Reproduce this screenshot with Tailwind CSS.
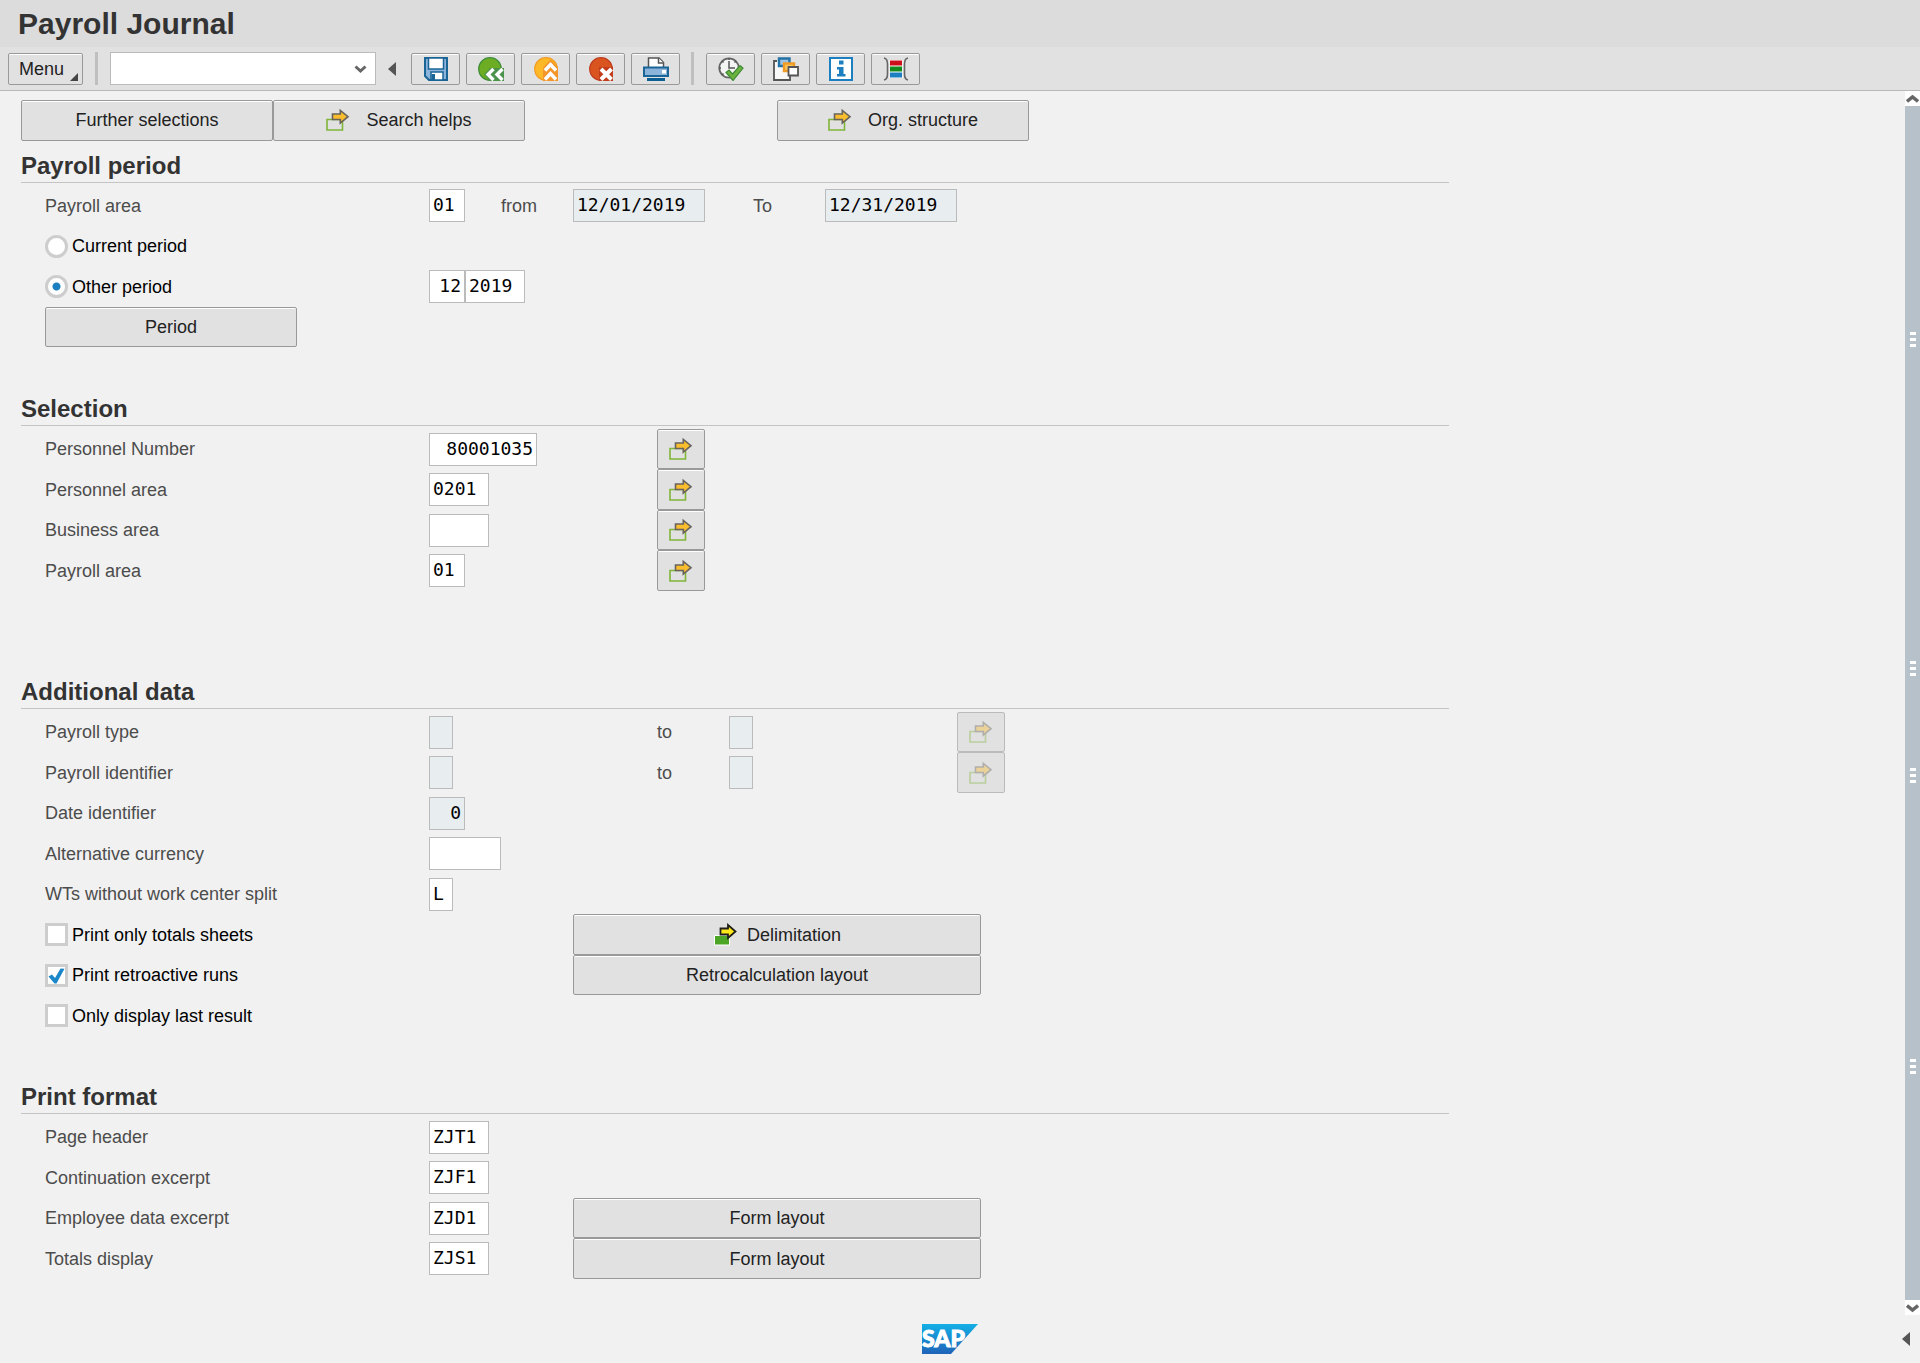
<!DOCTYPE html>
<html lang="en">
<head>
  <meta charset="UTF-8" />
  <title>Payroll Journal</title>
  <script src="https://cdn.jsdelivr.net/npm/@tailwindcss/browser@4"></script>
</head>
<body class="bg-[#f1f1f1] font-['Liberation_Sans',Arial,sans-serif] text-lg leading-6 text-[#4c4c4c]">
  <!-- shared icons -->
  <svg class="hidden">
    <symbol id="icon-multi" viewBox="0 0 24 24">
      <path d="M1 11.500h15.500v10.500H1z" fill="none" stroke="#7fb539" stroke-width="1.600" />
      <path d="M6.500 6h7.800V2.500l7.700 6.200-7.700 6.300v-3.500H6.500z" fill="#fabd2e" stroke="#68645c" stroke-width="1.600" />
    </symbol>
    <symbol id="icon-multi-active" viewBox="0 0 24 24">
      <path d="M1.500 12.500h15v9.500h-15z" fill="#4ca524" stroke="#fff" stroke-width="1" />
      <path d="M7.500 5.500H15V2l7.500 6.500L15 15v-3.500H7.500z" fill="#ffe81a" stroke="#20201a" stroke-width="1.800" />
    </symbol>
  </svg>

  <div class="min-h-screen flex flex-col">
    <header>
      <div class="h-[47px] flex items-center px-[18px] bg-[#dcdcdc]">
        <h1 class="text-3xl leading-9 font-bold text-[#333]">Payroll Journal</h1>
      </div>
      <nav class="h-11 flex items-center pl-2 bg-[#e1e1e1] border-b border-[#b8b8b8]">
        <button class="relative w-[75px] h-8 pl-[10px] text-left text-[#222] bg-[#e1e1e1] border border-[#999] rounded-xs shadow-[inset_0_1px_0_#fff]">
          Menu
          <svg class="absolute right-1 bottom-[3px] size-2" viewBox="0 0 8 8"><path d="M8 0v8H0z" fill="#444" /></svg>
        </button>
        <span class="w-[3px] h-[33px] ml-3 bg-[#bfbfbf]"></span>
        <div class="relative ml-3 w-[266px]">
          <select aria-label="Command" class="block w-full h-[33px] px-1 appearance-none bg-white border border-[#bbb]">
            <option></option>
          </select>
          <svg class="absolute right-[9px] top-3 w-[13px] h-[10px] pointer-events-none" viewBox="0 0 13 10"><path d="M1.500 2.500l5 4.500 5-4.500" fill="none" stroke="#666" stroke-width="3" /></svg>
        </div>
        <button aria-label="Hide toolbar" class="w-8 mr-[3px] flex justify-center">
          <svg class="w-2 h-[14px]" viewBox="0 0 8 14"><path d="M8 0v14L0 7z" fill="#555" /></svg>
        </button>
        <div class="flex gap-[6px]">
          <button aria-label="Save" class="w-[49px] h-8 flex items-center justify-center bg-[#e1e1e1] border border-[#999] rounded-xs shadow-[inset_0_1px_0_#fff]">
            <svg class="size-6" viewBox="0 0 24 24">
              <path d="M1 1h22v22H5l-4-4z" fill="#8cb4da" stroke="#1a6496" stroke-width="2" />
              <path d="M4.500 1h15v11h-15z" fill="#fff" stroke="#1a6496" stroke-width="1.500" />
              <path d="M7 15h12v8H7z" fill="#fff" stroke="#1a6496" stroke-width="1.500" />
              <path d="M7.500 17h3.500v6H7.500z" fill="#1a6496" />
            </svg>
          </button>
          <button aria-label="Back" class="w-[49px] h-8 flex items-center justify-center bg-[#e1e1e1] border border-[#999] rounded-xs shadow-[inset_0_1px_0_#fff]">
            <svg class="w-[26px] h-6" viewBox="0 0 26 24">
              <circle cx="12" cy="12" r="11.300" fill="#6cad24" stroke="#3d8c3a" stroke-width="1.200" />
              <path d="M12 11h14v13H12l-6-6.500z" fill="#4b934a" />
              <path d="M15.500 12l-5.500 5.500 5.500 5.500M24.500 12L19 17.500l5.500 5.500" fill="none" stroke="#fff" stroke-width="3.400" />
            </svg>
          </button>
          <button aria-label="Exit" class="w-[49px] h-8 flex items-center justify-center bg-[#e1e1e1] border border-[#999] rounded-xs shadow-[inset_0_1px_0_#fff]">
            <svg class="size-6" viewBox="0 0 24 24">
              <circle cx="12" cy="12" r="11.300" fill="#fdb827" stroke="#f29b22" stroke-width="1.200" />
              <path d="M16.500 2.500l7.500 8V24H9V10.500z" fill="#f5962a" />
              <path d="M11 13.500l5.500-6 5.500 6M11 22.500l5.500-6 5.500 6" fill="none" stroke="#fff" stroke-width="3.400" />
            </svg>
          </button>
          <button aria-label="Cancel" class="w-[49px] h-8 flex items-center justify-center bg-[#e1e1e1] border border-[#999] rounded-xs shadow-[inset_0_1px_0_#fff]">
            <svg class="size-6" viewBox="0 0 24 24">
              <circle cx="12" cy="12" r="11.300" fill="#d9541e" stroke="#bf3c1d" stroke-width="1.200" />
              <path d="M10 10h14v14H10z" fill="#c23c1c" />
              <path d="M12 12l10.500 10.500M22.500 12L12 22.500" stroke="#fff" stroke-width="4" />
            </svg>
          </button>
          <button aria-label="Print" class="w-[49px] h-8 flex items-center justify-center bg-[#e1e1e1] border border-[#999] rounded-xs shadow-[inset_0_1px_0_#fff]">
            <svg class="w-[26px] h-6" viewBox="0 0 26 24">
              <path d="M5.500 11V1H16l4.500 4.500V11" fill="#fff" stroke="#555" stroke-width="1.500" />
              <path d="M15.500 1v5h5" fill="#fff" stroke="#555" stroke-width="1.500" />
              <path d="M1 10.500h24V19H1z" fill="#8cb4da" stroke="#1a6496" stroke-width="2" />
              <path d="M19 13h4v3.500h-4z" fill="#fff" />
              <path d="M4 21h18v3H4z" fill="#0a5e93" />
            </svg>
          </button>
        </div>
        <span class="w-[3px] h-[33px] ml-[11px] mr-3 bg-[#bfbfbf]"></span>
        <div class="flex gap-[6px]">
          <button aria-label="Execute" class="w-[49px] h-8 flex items-center justify-center bg-[#e1e1e1] border border-[#999] rounded-xs shadow-[inset_0_1px_0_#fff]">
            <svg class="w-[26px] h-6" viewBox="0 0 26 24">
              <circle cx="11" cy="11" r="9.700" fill="#f4f4f4" stroke="#666" stroke-width="1.800" />
              <path d="M11 4v7h6M11 1v2M1 11h2M4 4l1.500 1.500M18 4l-1.500 1.500M4 18l1.500-1.500" fill="none" stroke="#555" stroke-width="1.500" />
              <path d="M8 15.500l3-2.500 3.500 4L22 8.500l3 2.500-10 12.500z" fill="#6cb33e" stroke="#3e8a36" stroke-width="1.200" />
            </svg>
          </button>
          <button aria-label="Get variant" class="w-[49px] h-8 flex items-center justify-center bg-[#e1e1e1] border border-[#999] rounded-xs shadow-[inset_0_1px_0_#fff]">
            <svg class="w-[26px] h-6" viewBox="0 0 26 24">
              <path d="M1 4h16v19H1z" fill="#f8f8f8" />
              <path d="M4 4H1v19h16v-4" fill="none" stroke="#555" stroke-width="1.800" />
              <path d="M6 1.500h10.500V9H6z" fill="#9cc3e2" stroke="#2471a6" stroke-width="2.400" />
              <path d="M11 6.500h10V14H11z" fill="#fcc55c" stroke="#f09a28" stroke-width="2.400" />
              <path d="M15.500 10h9.500v8.500h-9.500z" fill="#fff" stroke="#555" stroke-width="1.800" />
            </svg>
          </button>
          <button aria-label="Information" class="w-[49px] h-8 flex items-center justify-center bg-[#e1e1e1] border border-[#999] rounded-xs shadow-[inset_0_1px_0_#fff]">
            <svg class="size-6" viewBox="0 0 24 24">
              <path d="M1 1h22v22H1z" fill="#fff" stroke="#1b7fc0" stroke-width="2" />
              <path d="M10 3.500h4.500v4H10zM8 10h6.500v7h2v2.500H8V17h2v-4.500H8z" fill="#1b7fc0" />
            </svg>
          </button>
          <button aria-label="Selection options" class="w-[49px] h-8 flex items-center justify-center bg-[#e1e1e1] border border-[#999] rounded-xs shadow-[inset_0_1px_0_#fff]">
            <svg class="w-[26px] h-6" viewBox="0 0 26 24">
              <path d="M1 1c2.500.5 3.500 3 3.500 6v10c0 3-1 5.500-3.500 6M25 1c-2.500.5-3.500 3-3.500 6v10c0 3 1 5.500 3.500 6" fill="none" stroke="#666" stroke-width="1.600" />
              <path d="M6.500 3h13v18h-13z" fill="#fff" />
              <path d="M7 3.500h12v5H7z" fill="#cc1019" />
              <path d="M7 9.500h12v5H7z" fill="#128a1c" />
              <path d="M7 15.500h12v5H7z" fill="#1b7fc0" />
            </svg>
          </button>
        </div>
      </nav>
    </header>

    <div class="flex-1 flex">
      <main class="flex-1 pl-[21px] pt-[9px]">
        <!-- every screen column is 12px wide -->
        <div class="grid grid-cols-[repeat(119,12px)] h-[41px] mb-1">
          <button class="col-start-1 col-span-21 pb-0.5 text-[#222] bg-[#e1e1e1] border border-[#999] rounded-xs shadow-[inset_0_1px_0_#fff]">Further selections</button>
          <button class="col-start-22 col-span-21 pb-0.5 flex items-center justify-center gap-4 text-[#222] bg-[#e1e1e1] border border-[#999] rounded-xs shadow-[inset_0_1px_0_#fff]">
            <svg class="size-6"><use href="#icon-multi" /></svg>Search helps
          </button>
          <button class="col-start-64 col-span-21 pb-0.5 flex items-center justify-center gap-4 text-[#222] bg-[#e1e1e1] border border-[#999] rounded-xs shadow-[inset_0_1px_0_#fff]">
            <svg class="size-6"><use href="#icon-multi" /></svg>Org. structure
          </button>
        </div>

        <section class="grid grid-cols-[repeat(119,12px)] auto-rows-[40px_41px] items-center pb-[41px]">
          <h2 class="col-span-full self-start h-[38px] pt-1 text-2xl leading-[33px] font-bold text-[#333] border-b border-[#c4c4c4]">Payroll period</h2>

          <label for="area" class="col-start-3 col-span-32">Payroll area</label>
          <input id="area" value="01" class="col-start-35 col-span-3 w-full h-[33px] px-[3px] pb-0.5 font-['DejaVu_Sans_Mono',monospace] text-black bg-white border border-[#bbb]" />
          <label for="from" class="col-start-41 col-span-6">from</label>
          <input id="from" value="12/01/2019" disabled class="col-start-47 col-span-11 w-full h-[33px] px-[3px] pb-0.5 font-['DejaVu_Sans_Mono',monospace] text-black bg-[#e8edf0] border border-[#bbb]" />
          <label for="until" class="col-start-62 col-span-6">To</label>
          <input id="until" value="12/31/2019" disabled class="col-start-68 col-span-11 w-full h-[33px] px-[3px] pb-0.5 font-['DejaVu_Sans_Mono',monospace] text-black bg-[#e8edf0] border border-[#bbb]" />

          <label class="col-start-3 col-span-32 flex items-center gap-1 text-black">
            <input type="radio" name="period" class="appearance-none size-[23px] rounded-full bg-white border-3 border-[#cdcdcd]" />Current period
          </label>

          <label class="col-start-3 col-span-32 flex items-center gap-1 text-black">
            <input type="radio" name="period" checked class="appearance-none size-[23px] rounded-full bg-white border-3 border-[#cdcdcd] checked:bg-[radial-gradient(circle,#1b7fc0_3.5px,#fff_4.5px)]" />Other period
          </label>
          <input aria-label="Period number" value="12" class="col-start-35 col-span-3 w-full h-[33px] px-[3px] pb-0.5 text-right font-['DejaVu_Sans_Mono',monospace] text-black bg-white border border-[#bbb]" />
          <input aria-label="Period year" value="2019" class="col-start-38 col-span-5 w-full h-[33px] px-[3px] pb-0.5 font-['DejaVu_Sans_Mono',monospace] text-black bg-white border border-[#bbb]" />

          <button class="col-start-3 col-span-21 self-stretch text-[#222] bg-[#e1e1e1] border border-[#999] rounded-xs shadow-[inset_0_1px_0_#fff]">Period</button>
        </section>

        <section class="grid grid-cols-[repeat(119,12px)] auto-rows-[41px_40px] items-center pb-20">
          <h2 class="col-span-full self-start h-[38px] pt-1 text-2xl leading-[33px] font-bold text-[#333] border-b border-[#c4c4c4]">Selection</h2>

          <label for="pernr" class="col-start-3 col-span-32">Personnel Number</label>
          <input id="pernr" value="80001035" class="col-start-35 col-span-9 w-full h-[33px] px-[3px] pb-0.5 text-right font-['DejaVu_Sans_Mono',monospace] text-black bg-white border border-[#bbb]" />
          <button aria-label="Multiple selection, personnel number" class="col-start-54 col-span-4 self-stretch flex items-center justify-center bg-[#e1e1e1] border border-[#999] rounded-xs shadow-[inset_0_1px_0_#fff]">
            <svg class="size-6"><use href="#icon-multi" /></svg>
          </button>

          <label for="persarea" class="col-start-3 col-span-32">Personnel area</label>
          <input id="persarea" value="0201" class="col-start-35 col-span-5 w-full h-[33px] px-[3px] pb-0.5 font-['DejaVu_Sans_Mono',monospace] text-black bg-white border border-[#bbb]" />
          <button aria-label="Multiple selection, personnel area" class="col-start-54 col-span-4 self-stretch flex items-center justify-center bg-[#e1e1e1] border border-[#999] rounded-xs shadow-[inset_0_1px_0_#fff]">
            <svg class="size-6"><use href="#icon-multi" /></svg>
          </button>

          <label for="busarea" class="col-start-3 col-span-32">Business area</label>
          <input id="busarea" class="col-start-35 col-span-5 w-full h-[33px] px-[3px] pb-0.5 font-['DejaVu_Sans_Mono',monospace] text-black bg-white border border-[#bbb]" />
          <button aria-label="Multiple selection, business area" class="col-start-54 col-span-4 self-stretch flex items-center justify-center bg-[#e1e1e1] border border-[#999] rounded-xs shadow-[inset_0_1px_0_#fff]">
            <svg class="size-6"><use href="#icon-multi" /></svg>
          </button>

          <label for="selarea" class="col-start-3 col-span-32">Payroll area</label>
          <input id="selarea" value="01" class="col-start-35 col-span-3 w-full h-[33px] px-[3px] pb-0.5 font-['DejaVu_Sans_Mono',monospace] text-black bg-white border border-[#bbb]" />
          <button aria-label="Multiple selection, payroll area" class="col-start-54 col-span-4 self-stretch flex items-center justify-center bg-[#e1e1e1] border border-[#999] rounded-xs shadow-[inset_0_1px_0_#fff]">
            <svg class="size-6"><use href="#icon-multi" /></svg>
          </button>
        </section>

        <section class="grid grid-cols-[repeat(119,12px)] auto-rows-[41px_40px] items-center pb-10">
          <h2 class="col-span-full self-start h-[38px] pt-1 text-2xl leading-[33px] font-bold text-[#333] border-b border-[#c4c4c4]">Additional data</h2>

          <label for="type" class="col-start-3 col-span-32">Payroll type</label>
          <input id="type" disabled class="col-start-35 col-span-2 w-full h-[33px] px-[3px] bg-[#e8edf0] border border-[#bbb]" />
          <label for="type2" class="col-start-54 col-span-6">to</label>
          <input id="type2" disabled class="col-start-60 col-span-2 w-full h-[33px] px-[3px] bg-[#e8edf0] border border-[#bbb]" />
          <button disabled aria-label="Multiple selection, payroll type" class="col-start-79 col-span-4 self-stretch flex items-center justify-center bg-[#e1e1e1] border border-[#bbb] rounded-xs">
            <svg class="size-6 opacity-40"><use href="#icon-multi" /></svg>
          </button>

          <label for="ident" class="col-start-3 col-span-32">Payroll identifier</label>
          <input id="ident" disabled class="col-start-35 col-span-2 w-full h-[33px] px-[3px] bg-[#e8edf0] border border-[#bbb]" />
          <label for="ident2" class="col-start-54 col-span-6">to</label>
          <input id="ident2" disabled class="col-start-60 col-span-2 w-full h-[33px] px-[3px] bg-[#e8edf0] border border-[#bbb]" />
          <button disabled aria-label="Multiple selection, payroll identifier" class="col-start-79 col-span-4 self-stretch flex items-center justify-center bg-[#e1e1e1] border border-[#bbb] rounded-xs">
            <svg class="size-6 opacity-40"><use href="#icon-multi" /></svg>
          </button>

          <label for="dateid" class="col-start-3 col-span-32">Date identifier</label>
          <input id="dateid" value="0" disabled class="col-start-35 col-span-3 w-full h-[33px] px-[3px] pb-0.5 text-right font-['DejaVu_Sans_Mono',monospace] text-black bg-[#e8edf0] border border-[#bbb]" />

          <label for="currency" class="col-start-3 col-span-32">Alternative currency</label>
          <input id="currency" class="col-start-35 col-span-6 w-full h-[33px] px-[3px] pb-0.5 font-['DejaVu_Sans_Mono',monospace] text-black bg-white border border-[#bbb]" />

          <label for="split" class="col-start-3 col-span-32">WTs without work center split</label>
          <input id="split" value="L" class="col-start-35 col-span-2 w-full h-[33px] px-[3px] pb-0.5 font-['DejaVu_Sans_Mono',monospace] text-black bg-white border border-[#bbb]" />

          <label class="col-start-3 col-span-32 flex items-center gap-1 text-black">
            <input type="checkbox" class="appearance-none size-[23px] bg-white border-3 border-[#cdcdcd]" />Print only totals sheets
          </label>
          <button class="col-start-47 col-span-34 self-stretch flex items-center justify-center gap-[10px] text-[#222] bg-[#e1e1e1] border border-[#999] rounded-xs shadow-[inset_0_1px_0_#fff]">
            <svg class="size-6"><use href="#icon-multi-active" /></svg>Delimitation
          </button>

          <label class="relative col-start-3 col-span-32 flex items-center gap-1 text-black">
            <input type="checkbox" checked class="peer appearance-none size-[23px] bg-white border-3 border-[#cdcdcd]" />
            <svg class="absolute left-0 size-[23px] hidden peer-checked:block pointer-events-none" viewBox="0 0 23 23"><path d="M3.500 12.500L7 10.500l3 3.500 5.500-9.500 4 .2L11.500 19.500H9.500z" fill="#1b87c9" /></svg>
            Print retroactive runs
          </label>
          <button class="col-start-47 col-span-34 self-stretch text-[#222] bg-[#e1e1e1] border border-[#999] rounded-xs shadow-[inset_0_1px_0_#fff]">Retrocalculation layout</button>

          <label class="col-start-3 col-span-32 flex items-center gap-1 text-black">
            <input type="checkbox" class="appearance-none size-[23px] bg-white border-3 border-[#cdcdcd]" />Only display last result
          </label>
        </section>

        <section class="grid grid-cols-[repeat(119,12px)] auto-rows-[41px_40px] items-center">
          <h2 class="col-span-full self-start h-[38px] pt-1 text-2xl leading-[33px] font-bold text-[#333] border-b border-[#c4c4c4]">Print format</h2>

          <label for="pageheader" class="col-start-3 col-span-32">Page header</label>
          <input id="pageheader" value="ZJT1" class="col-start-35 col-span-5 w-full h-[33px] px-[3px] pb-0.5 font-['DejaVu_Sans_Mono',monospace] text-black bg-white border border-[#bbb]" />

          <label for="continuation" class="col-start-3 col-span-32">Continuation excerpt</label>
          <input id="continuation" value="ZJF1" class="col-start-35 col-span-5 w-full h-[33px] px-[3px] pb-0.5 font-['DejaVu_Sans_Mono',monospace] text-black bg-white border border-[#bbb]" />

          <label for="employee" class="col-start-3 col-span-32">Employee data excerpt</label>
          <input id="employee" value="ZJD1" class="col-start-35 col-span-5 w-full h-[33px] px-[3px] pb-0.5 font-['DejaVu_Sans_Mono',monospace] text-black bg-white border border-[#bbb]" />
          <button class="col-start-47 col-span-34 self-stretch text-[#222] bg-[#e1e1e1] border border-[#999] rounded-xs shadow-[inset_0_1px_0_#fff]">Form layout</button>

          <label for="totals" class="col-start-3 col-span-32">Totals display</label>
          <input id="totals" value="ZJS1" class="col-start-35 col-span-5 w-full h-[33px] px-[3px] pb-0.5 font-['DejaVu_Sans_Mono',monospace] text-black bg-white border border-[#bbb]" />
          <button class="col-start-47 col-span-34 self-stretch text-[#222] bg-[#e1e1e1] border border-[#999] rounded-xs shadow-[inset_0_1px_0_#fff]">Form layout</button>
        </section>
      </main>

      <!-- scrollbar -->
      <aside class="w-[15px] flex flex-col bg-[#b7c1ca]">
        <button aria-label="Scroll up" class="h-[15px] flex items-center justify-center bg-white">
          <svg class="w-[13px] h-[10px]" viewBox="0 0 13 10"><path d="M1 7.500L6.500 3 12 7.500" fill="none" stroke="#666" stroke-width="3.400" /></svg>
        </button>
        <div class="flex-1 flex flex-col items-center">
          <span class="grow-226 basis-0"></span>
          <svg class="w-[6px] h-[15px]" viewBox="0 0 6 15"><path d="M0 0h6v3H0zM0 6h6v3H0zM0 12h6v3H0z" fill="#fff" /></svg>
          <span class="grow-314 basis-0"></span>
          <svg class="w-[6px] h-[15px]" viewBox="0 0 6 15"><path d="M0 0h6v3H0zM0 6h6v3H0zM0 12h6v3H0z" fill="#fff" /></svg>
          <span class="grow-91 basis-0"></span>
          <svg class="w-[6px] h-[15px]" viewBox="0 0 6 15"><path d="M0 0h6v3H0zM0 6h6v3H0zM0 12h6v3H0z" fill="#fff" /></svg>
          <span class="grow-276 basis-0"></span>
          <svg class="w-[6px] h-[15px]" viewBox="0 0 6 15"><path d="M0 0h6v3H0zM0 6h6v3H0zM0 12h6v3H0z" fill="#fff" /></svg>
          <span class="grow-226 basis-0"></span>
        </div>
        <button aria-label="Scroll down" class="h-[15px] flex items-center justify-center bg-white">
          <svg class="w-[13px] h-[10px]" viewBox="0 0 13 10"><path d="M1 2.500L6.500 7 12 2.500" fill="none" stroke="#666" stroke-width="3.400" /></svg>
        </button>
      </aside>
    </div>

    <footer class="h-12 flex items-center">
      <span class="flex-1"></span>
      <svg class="w-14 h-[30px]" viewBox="0 0 56 30" role="img" aria-label="SAP">
        <defs>
          <linearGradient id="logo-blue" x1="0" y1="0" x2="0" y2="1">
            <stop offset="0" stop-color="#14b0e6" />
            <stop offset="1" stop-color="#1f63b8" />
          </linearGradient>
        </defs>
        <path d="M0 0h56L29 30H0z" fill="url(#logo-blue)" />
        <text x="0" y="23" font-family="Lato, sans-serif" font-weight="900" font-size="23" fill="#fff" stroke="#fff" stroke-width="1">SAP</text>
      </svg>
      <span class="flex-1"></span>
      <button aria-label="Show status" class="w-5 pl-[2px]">
        <svg class="w-2 h-[14px]" viewBox="0 0 8 14"><path d="M8 0v14L0 7z" fill="#555" /></svg>
      </button>
    </footer>
  </div>
</body>
</html>
